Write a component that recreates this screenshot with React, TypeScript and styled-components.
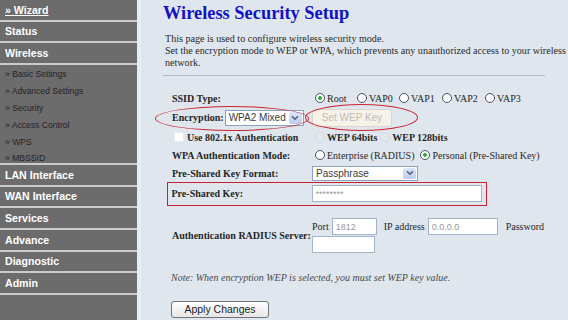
import React from 'react';
import styled, { createGlobalStyle } from 'styled-components';

const Global = createGlobalStyle`
  html, body { margin: 0; padding: 0; }
  body { width: 568px; height: 320px; overflow: hidden; background: #dfe6ee; }
`;

const Page = styled.div`
  display: flex;
  width: 568px;
  height: 320px;
  overflow: hidden;
  background: #dfe6ee;
`;

const Sidebar = styled.nav`
  width: 137px;
  flex: none;
  background: #6c6c6c;
  border-right: 4px solid #e8edf2;
  font-family: "Liberation Sans", Arial, sans-serif;
`;

const NavItem = styled.div<{ $underline?: boolean }>`
  height: 19.67px;
  border-bottom: 2px solid #cbcbcb;
  padding-left: 5px;
  display: flex;
  align-items: center;
  color: #ffffff;
  font-weight: bold;
  font-size: 10.6px;
  text-decoration: ${p => (p.$underline ? 'underline' : 'none')};
`;

const SubList = styled.div`
  height: 100px;
  box-sizing: border-box;
  padding-top: 1px;
  border-bottom: 2px solid #cbcbcb;
  overflow: hidden;
`;

const SubItem = styled.div`
  height: 16.8px;
  padding-left: 5px;
  display: flex;
  align-items: center;
  color: #262228;
  font-size: 8.6px;
`;

const Main = styled.main`
  flex: 1;
  min-width: 0;
  padding: 1.5px 0 0 22px;
  font-family: "Liberation Serif", "Times New Roman", serif;
  color: #222;
`;

const Title = styled.h1`
  margin: 0;
  font-size: 18.4px;
  line-height: 22px;
  font-weight: bold;
  color: #1212c4;
`;

const Intro = styled.p`
  margin: 9.5px 0 0 2px;
  font-size: 10.1px;
  line-height: 12px;
  white-space: nowrap;
  color: #2a2a2a;
`;

const Rule = styled.hr`
  margin: 6px 0 0 0;
  width: 382px;
  border: none;
  border-top: 1px solid #b3bbc4;
  height: 0;
`;

const Form = styled.div`
  margin: 13.5px 0 0 4px;
  display: flex;
  flex-direction: column;
`;

const Row = styled.div<{ $h: number; $boxed?: boolean; $mt?: number }>`
  height: ${p => p.$h}px;
  margin-top: ${p => p.$mt ?? 0}px;
  box-sizing: border-box;
  display: flex;
  align-items: center;
  padding-left: ${p => (p.$boxed ? 3.5 : 5)}px;
  width: ${p => (p.$boxed ? '320px' : 'auto')};
  border: ${p => (p.$boxed ? '1.5px solid #c8202c' : 'none')};
`;

const Label = styled.div`
  width: 140px;
  flex: none;
  display: flex;
  align-items: center;
  font-weight: bold;
  font-size: 10px;
  color: #262626;
  white-space: nowrap;
`;

const Value = styled.div<{ $gap?: number }>`
  display: flex;
  align-items: center;
  gap: ${p => p.$gap ?? 0}px;
  font-size: 10px;
  white-space: nowrap;
`;

const Circled = styled.span<{ $gap?: number }>`
  position: relative;
  display: inline-flex;
  align-items: center;
  gap: ${p => p.$gap ?? 0}px;
`;

const Ellipse = styled.span<{ $l: number; $r: number; $t: number; $b: number }>`
  position: absolute;
  left: ${p => p.$l}px;
  right: ${p => p.$r}px;
  top: ${p => p.$t}px;
  bottom: ${p => p.$b}px;
  border: 1.5px solid #cc2430;
  border-radius: 50%;
  pointer-events: none;
`;

const RadioOption = styled.label<{ $w?: number; $bold?: boolean }>`
  display: inline-flex;
  align-items: center;
  gap: 2px;
  margin-left: 3px;
  width: ${p => (p.$w ? `${p.$w}px` : 'auto')};
  flex: none;
  font-weight: ${p => (p.$bold ? 'bold' : 'normal')};
  color: #262626;
`;

const RadioDot = styled.span<{ $checked?: boolean; $disabled?: boolean }>`
  width: 10px;
  height: 10px;
  box-sizing: border-box;
  border-radius: 50%;
  flex: none;
  border: 1px solid ${p => (p.$disabled ? '#d3d9e0' : '#4b5260')};
  background: ${p => (p.$disabled ? '#e4e9ee' : '#ffffff')};
  display: inline-flex;
  align-items: center;
  justify-content: center;
  &::after {
    content: '';
    width: 4px;
    height: 4px;
    border-radius: 50%;
    background: #35a535;
    display: ${p => (p.$checked ? 'block' : 'none')};
  }
`;

const Check = styled.span`
  width: 10px;
  height: 10px;
  margin: 0 3px 0 2px;
  background: #ffffff;
  border: 1px solid #e9edf2;
  box-sizing: border-box;
  flex: none;
`;

const SelectBox = styled.div<{ $w: number; $h: number }>`
  width: ${p => p.$w}px;
  height: ${p => p.$h}px;
  box-sizing: border-box;
  border: 1px solid #8aa2bd;
  background: #ffffff;
  display: flex;
  align-items: center;
  font-family: "Liberation Sans", Arial, sans-serif;
  font-size: 10px;
  font-weight: normal;
  color: #3c3c3c;
  padding-left: 3px;
`;

const SelectText = styled.span`
  flex: 1;
`;

const SelectArrow = styled.span`
  width: 13px;
  height: calc(100% - 2px);
  margin-right: 1px;
  background: linear-gradient(#dce6f6, #bccdec);
  border-radius: 2px;
  display: flex;
  align-items: center;
  justify-content: center;
`;

const Chevron = () => (
  <svg width="8" height="6" viewBox="0 0 8 6">
    <path d="M1 1.2 L4 4.2 L7 1.2" fill="none" stroke="#4d6185" strokeWidth="1.6" />
  </svg>
);

const Select = ({ text, w, h }: { text: string; w: number; h: number }) => (
  <SelectBox $w={w} $h={h}>
    <SelectText>{text}</SelectText>
    <SelectArrow>
      <Chevron />
    </SelectArrow>
  </SelectBox>
);

const GhostButton = styled.button`
  width: 80px;
  height: 18px;
  box-sizing: border-box;
  border: 1px solid #ddd6c8;
  border-radius: 3px;
  background: #f5f2ea;
  color: #c4bcb2;
  font-family: "Liberation Sans", Arial, sans-serif;
  font-size: 10px;
  padding: 0;
`;

const TextInput = styled.input<{ $w: number }>`
  width: ${p => p.$w}px;
  height: 17px;
  box-sizing: border-box;
  border: 1px solid #a4b4c7;
  background: #ffffff;
  padding: 0 3px;
  margin: 0;
  font-family: "Liberation Sans", Arial, sans-serif;
  font-size: 9px;
  color: #9a9a9a;
  outline: none;
`;

const Stack = styled.div`
  display: flex;
  flex-direction: column;
  gap: 1px;
  font-size: 10px;
`;

const Inline = styled.div`
  display: flex;
  align-items: center;
  gap: 3px;
  white-space: nowrap;
`;

const FieldText = styled.span<{ $ml?: number }>`
  margin-left: ${p => p.$ml ?? 0}px;
  color: #262626;
`;

const Note = styled.p`
  margin: 18px 0 0 8px;
  font-style: italic;
  font-size: 10px;
  color: #4a4a4a;
  white-space: nowrap;
`;

const ApplyButton = styled.button`
  margin: 18px 0 0 8px;
  width: 98px;
  height: 17px;
  box-sizing: border-box;
  border: 1px solid #6f747a;
  border-radius: 3px;
  background: linear-gradient(#ffffff, #e6e6e6);
  font-family: "Liberation Sans", Arial, sans-serif;
  font-size: 10.5px;
  color: #222;
  padding: 0;
`;

const Radio = ({
  label,
  checked,
  disabled,
  w,
  bold,
}: {
  label: string;
  checked?: boolean;
  disabled?: boolean;
  w?: number;
  bold?: boolean;
}) => (
  <RadioOption $w={w} $bold={bold}>
    <RadioDot $checked={checked} $disabled={disabled} />
    {label}
  </RadioOption>
);

const navTop = ['Status', 'Wireless'];
const subItems = ['Basic Settings', 'Advanced Settings', 'Security', 'Access Control', 'WPS', 'MBSSID'];
const navBottom = ['LAN Interface', 'WAN Interface', 'Services', 'Advance', 'Diagnostic', 'Admin'];

export default function App() {
  return (
    <Page>
      <Global />
      <Sidebar>
        <NavItem $underline>» Wizard</NavItem>
        {navTop.map(n => (
          <NavItem key={n}>{n}</NavItem>
        ))}
        <SubList>
          {subItems.map(s => (
            <SubItem key={s}>» {s}</SubItem>
          ))}
        </SubList>
        {navBottom.map(n => (
          <NavItem key={n}>{n}</NavItem>
        ))}
      </Sidebar>
      <Main>
        <Title>Wireless Security Setup</Title>
        <Intro>
          This page is used to configure wireless security mode.
          <br />
          Set the encryption mode to WEP or WPA, which prevents any unauthorized access to your wireless
          <br />
          network.
        </Intro>
        <Rule />
        <Form>
          <Row $h={17}>
            <Label>SSID Type:</Label>
            <Value>
              <Radio label="Root" checked w={39} />
              <Radio label="VAP0" w={39} />
              <Radio label="VAP1" w={40} />
              <Radio label="VAP2" w={40} />
              <Radio label="VAP3" w={40} />
            </Value>
          </Row>
          <Row $h={22}>
            <Label>
              <Circled $gap={1}>
                <Ellipse $l={-17} $r={-5} $t={-4} $b={-5} />
                Encryption:
                <Select text="WPA2 Mixed" w={79} h={16} />
              </Circled>
            </Label>
            <Value>
              <Circled>
                <Ellipse $l={-7} $r={-26} $t={-5} $b={-4} />
                <GhostButton disabled>Set WEP Key</GhostButton>
              </Circled>
            </Value>
          </Row>
          <Row $h={17}>
            <Label>
              <Check />
              Use 802.1x Authentication
            </Label>
            <Value>
              <Radio label="WEP 64bits" disabled bold />
              <Radio label="WEP 128bits" disabled bold />
            </Value>
          </Row>
          <Row $h={19}>
            <Label>WPA Authentication Mode:</Label>
            <Value $gap={3}>
              <Radio label="Enterprise (RADIUS)" />
              <Radio label="Personal (Pre-Shared Key)" checked />
            </Value>
          </Row>
          <Row $h={17}>
            <Label>Pre-Shared Key Format:</Label>
            <Value>
              <Select text="Passphrase" w={106} h={15} />
            </Value>
          </Row>
          <Row $h={24} $boxed>
            <Label>Pre-Shared Key:</Label>
            <Value>
              <TextInput $w={170} defaultValue="********" readOnly />
            </Value>
          </Row>
          <Row $h={36} $mt={12}>
            <Label>Authentication RADIUS Server:</Label>
            <Stack>
              <Inline>
                <FieldText>Port</FieldText>
                <TextInput $w={45} defaultValue="1812" readOnly />
                <FieldText $ml={4}>IP address</FieldText>
                <TextInput $w={70} defaultValue="0.0.0.0" readOnly />
                <FieldText $ml={5}>Password</FieldText>
              </Inline>
              <TextInput $w={63} defaultValue="" readOnly />
            </Stack>
          </Row>
        </Form>
        <Note>Note: When encryption WEP is selected, you must set WEP key value.</Note>
        <ApplyButton>Apply Changes</ApplyButton>
      </Main>
    </Page>
  );
}
